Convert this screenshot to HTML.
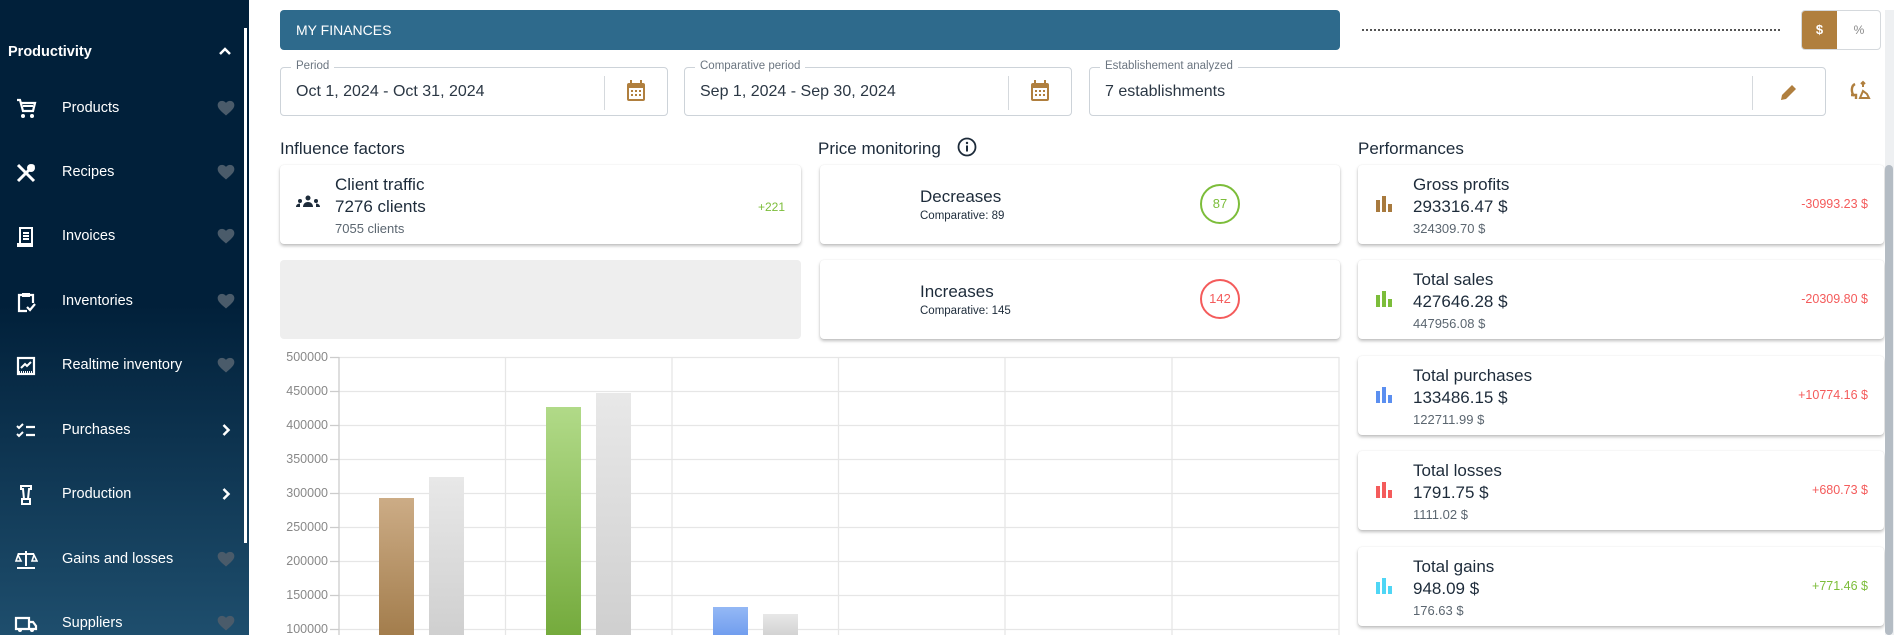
<!DOCTYPE html>
<html><head><meta charset="utf-8"><style>
*{box-sizing:border-box;margin:0;padding:0}
body{width:1898px;height:635px;overflow:hidden;background:#fff;font-family:"Liberation Sans",sans-serif;color:#1d2b3a;position:relative}
.a{position:absolute}
#sb{left:0;top:0;width:249px;height:635px;background:linear-gradient(180deg,#01203a 0%,#01203a 48%,#1e4e6d 100%)}
.it{position:absolute;left:0;width:249px;height:30px;color:#fff;font-size:14.5px}
.it .ic{position:absolute;left:14px;top:3px;width:24px;height:24px}
.it .lb{position:absolute;left:62px;top:6px}
.it .hr{position:absolute;left:216px;top:4px;width:20px;height:20px}
.fld{position:absolute;top:67px;height:49px;border:1px solid #cdd3d9;border-radius:4px}
.fld .lg{position:absolute;top:-8px;left:10px;background:#fff;padding:0 5px;font-size:11.5px;color:#6b7580}
.fld .v{position:absolute;left:15px;top:15px;font-size:16px;color:#2b3744}
.fld .sep{position:absolute;top:8px;width:1px;height:34px;background:#d5d9dd}
.card{position:absolute;background:#fff;border-radius:4px;box-shadow:0 2px 3px rgba(0,0,0,.25),0 0 1px rgba(0,0,0,.12)}
.st{position:absolute;top:139px;font-size:17px;color:#1d2b3a}
.pc .t{position:absolute;left:55px;top:10px;font-size:17px}
.pc .v{position:absolute;left:55px;top:32px;font-size:17px}
.pc .s{position:absolute;left:55px;top:56px;font-size:13px;color:#5b6670}
.pc .d{position:absolute;right:16px;top:32px;font-size:12.5px}
.pc svg{position:absolute;left:18px;top:31px}
.yl{position:absolute;left:282px;width:46px;text-align:right;font-size:12.5px;color:#888}
</style></head><body>
<div id="sb" class="a">
 <div class="a" style="left:244px;top:28px;width:3px;height:515px;background:#fff"></div>
 <div class="a" style="left:8px;top:44px;color:#fff;font-weight:bold;font-size:14.5px">Productivity</div>
 <svg class="a" style="left:218px;top:46px" width="14" height="10" viewBox="0 0 14 10"><path d="M2 8 L7 3 L12 8" stroke="#fff" stroke-width="2.5" fill="none"/></svg>

 <div class="it" style="top:94px"><svg class="ic" viewBox="0 0 24 24"><path d="M3 3h3l3 11h10l2-8H7" stroke="#fff" stroke-width="2.2" fill="none"/><path d="M9 9h10" stroke="#fff" stroke-width="2"/><circle cx="9" cy="19" r="2" fill="#fff"/><circle cx="18" cy="19" r="2" fill="#fff"/></svg><span class="lb">Products</span><svg class="hr" viewBox="0 0 24 24"><path d="M12 21l-1.5-1.3C5 15 2 12 2 8.5 2 5.5 4.4 3.5 7.2 3.5c1.7 0 3.5.8 4.8 2.3 1.3-1.5 3.1-2.3 4.8-2.3 2.8 0 5.2 2 5.2 5 0 3.5-3 6.5-8.5 11.2z" fill="#4a5b6a"/></svg></div>
 <div class="it" style="top:158px"><svg class="ic" viewBox="0 0 24 24"><path d="M4 4 L20 20 M20 4 L4 20" stroke="#fff" stroke-width="3"/><circle cx="17" cy="7" r="4" fill="#fff"/></svg><span class="lb">Recipes</span><svg class="hr" viewBox="0 0 24 24"><path d="M12 21l-1.5-1.3C5 15 2 12 2 8.5 2 5.5 4.4 3.5 7.2 3.5c1.7 0 3.5.8 4.8 2.3 1.3-1.5 3.1-2.3 4.8-2.3 2.8 0 5.2 2 5.2 5 0 3.5-3 6.5-8.5 11.2z" fill="#4a5b6a"/></svg></div>
 <div class="it" style="top:222px"><svg class="ic" viewBox="0 0 24 24"><path d="M6 3h12v16H6z M4 19h14v2H4z" stroke="#fff" stroke-width="2" fill="none"/><path d="M9 8h6M9 11h6M9 14h6" stroke="#fff" stroke-width="2"/></svg><span class="lb">Invoices</span><svg class="hr" viewBox="0 0 24 24"><path d="M12 21l-1.5-1.3C5 15 2 12 2 8.5 2 5.5 4.4 3.5 7.2 3.5c1.7 0 3.5.8 4.8 2.3 1.3-1.5 3.1-2.3 4.8-2.3 2.8 0 5.2 2 5.2 5 0 3.5-3 6.5-8.5 11.2z" fill="#4a5b6a"/></svg></div>
 <div class="it" style="top:287px"><svg class="ic" viewBox="0 0 24 24"><path d="M8 5H5v16h8 M16 5h3v8" stroke="#fff" stroke-width="2.2" fill="none"/><rect x="8" y="3" width="8" height="4" fill="#fff"/><path d="M13 17l3 3 5-6" stroke="#fff" stroke-width="2.2" fill="none"/></svg><span class="lb">Inventories</span><svg class="hr" viewBox="0 0 24 24"><path d="M12 21l-1.5-1.3C5 15 2 12 2 8.5 2 5.5 4.4 3.5 7.2 3.5c1.7 0 3.5.8 4.8 2.3 1.3-1.5 3.1-2.3 4.8-2.3 2.8 0 5.2 2 5.2 5 0 3.5-3 6.5-8.5 11.2z" fill="#4a5b6a"/></svg></div>
 <div class="it" style="top:351px"><svg class="ic" viewBox="0 0 24 24"><rect x="4" y="4" width="16" height="16" stroke="#fff" stroke-width="2.2" fill="none"/><path d="M7 14l4-4 2 2 4-4" stroke="#fff" stroke-width="2" fill="none"/><path d="M5 18h14" stroke="#fff" stroke-width="2" stroke-dasharray="1 1"/></svg><span class="lb">Realtime inventory</span><svg class="hr" viewBox="0 0 24 24"><path d="M12 21l-1.5-1.3C5 15 2 12 2 8.5 2 5.5 4.4 3.5 7.2 3.5c1.7 0 3.5.8 4.8 2.3 1.3-1.5 3.1-2.3 4.8-2.3 2.8 0 5.2 2 5.2 5 0 3.5-3 6.5-8.5 11.2z" fill="#4a5b6a"/></svg></div>
 <div class="it" style="top:416px"><svg class="ic" viewBox="0 0 24 24"><path d="M3 7l2 2 4-4 M3 15l2 2 4-4" stroke="#fff" stroke-width="2" fill="none"/><path d="M12 8h9M12 16h9" stroke="#fff" stroke-width="2.2"/></svg><span class="lb">Purchases</span><svg class="hr" viewBox="0 0 24 24"><path d="M9 6l6 6-6 6" stroke="#fff" stroke-width="3" fill="none"/></svg></div>
 <div class="it" style="top:480px"><svg class="ic" viewBox="0 0 24 24"><path d="M7 3h10v3h-2l-1 10h-4L9 6H7z M8 16h8v5H8z" stroke="#fff" stroke-width="2" fill="none"/></svg><span class="lb">Production</span><svg class="hr" viewBox="0 0 24 24"><path d="M9 6l6 6-6 6" stroke="#fff" stroke-width="3" fill="none"/></svg></div>
 <div class="it" style="top:545px"><svg class="ic" viewBox="0 0 24 24"><path d="M12 3v15M4 6h16M3 20h18" stroke="#fff" stroke-width="2"/><path d="M4 7l-2 6h5z M20 7l-2 6h5z" stroke="#fff" stroke-width="1.6" fill="none"/></svg><span class="lb">Gains and losses</span><svg class="hr" viewBox="0 0 24 24"><path d="M12 21l-1.5-1.3C5 15 2 12 2 8.5 2 5.5 4.4 3.5 7.2 3.5c1.7 0 3.5.8 4.8 2.3 1.3-1.5 3.1-2.3 4.8-2.3 2.8 0 5.2 2 5.2 5 0 3.5-3 6.5-8.5 11.2z" fill="#4a5b6a"/></svg></div>
 <div class="it" style="top:609px"><svg class="ic" viewBox="0 0 24 24"><path d="M2 6h13v11H2z M15 10h4l3 4v3h-7" stroke="#fff" stroke-width="2.2" fill="none"/><circle cx="6" cy="18" r="2" fill="#fff"/><circle cx="18" cy="18" r="2" fill="#fff"/></svg><span class="lb">Suppliers</span><svg class="hr" viewBox="0 0 24 24"><path d="M12 21l-1.5-1.3C5 15 2 12 2 8.5 2 5.5 4.4 3.5 7.2 3.5c1.7 0 3.5.8 4.8 2.3 1.3-1.5 3.1-2.3 4.8-2.3 2.8 0 5.2 2 5.2 5 0 3.5-3 6.5-8.5 11.2z" fill="#4a5b6a"/></svg></div>
</div>

<div class="a" style="left:280px;top:10px;width:1060px;height:40px;background:#2e6a8c;border-radius:4px;color:#fff;font-size:14px;padding:12px 16px">MY FINANCES</div>
<div class="a" style="left:1362px;top:29px;width:418px;border-top:2px dotted #555"></div>
<div class="a" style="left:1801px;top:10px;width:80px;height:40px;border:1px solid #d5d9dd;border-radius:4px;overflow:hidden">
 <div class="a" style="left:0;top:0;width:35px;height:40px;background:#b07f3e;color:#fff;font-size:13px;font-weight:bold;text-align:center;line-height:38px">$</div>
 <div class="a" style="left:35px;top:0;width:44px;height:40px;color:#888;font-size:12px;text-align:center;line-height:38px">%</div>
</div>

<div class="fld" style="left:280px;width:388px"><span class="lg">Period</span><span class="v">Oct 1, 2024 - Oct 31, 2024</span><div class="sep" style="left:323px"></div>
<svg class="a" style="left:345px;top:12px" width="20" height="22" viewBox="0 0 20 22"><rect x="1" y="3" width="18" height="18" rx="2" fill="#b07f3e"/><rect x="3" y="8" width="14" height="11" fill="#fff"/><rect x="4" y="0" width="2" height="5" fill="#b07f3e"/><rect x="14" y="0" width="2" height="5" fill="#b07f3e"/><g fill="#b07f3e"><rect x="5" y="10" width="2" height="2"/><rect x="9" y="10" width="2" height="2"/><rect x="13" y="10" width="2" height="2"/><rect x="5" y="14" width="2" height="2"/><rect x="9" y="14" width="2" height="2"/><rect x="13" y="14" width="2" height="2"/></g></svg></div>
<div class="fld" style="left:684px;width:388px"><span class="lg">Comparative period</span><span class="v">Sep 1, 2024 - Sep 30, 2024</span><div class="sep" style="left:323px"></div>
<svg class="a" style="left:345px;top:12px" width="20" height="22" viewBox="0 0 20 22"><rect x="1" y="3" width="18" height="18" rx="2" fill="#b07f3e"/><rect x="3" y="8" width="14" height="11" fill="#fff"/><rect x="4" y="0" width="2" height="5" fill="#b07f3e"/><rect x="14" y="0" width="2" height="5" fill="#b07f3e"/><g fill="#b07f3e"><rect x="5" y="10" width="2" height="2"/><rect x="9" y="10" width="2" height="2"/><rect x="13" y="10" width="2" height="2"/><rect x="5" y="14" width="2" height="2"/><rect x="9" y="14" width="2" height="2"/><rect x="13" y="14" width="2" height="2"/></g></svg></div>
<div class="fld" style="left:1089px;width:737px"><span class="lg">Establishement analyzed</span><span class="v">7 establishments</span><div class="sep" style="left:662px"></div>
<svg class="a" style="left:689px;top:14px" width="20" height="20" viewBox="0 0 20 20"><path d="M2 18l1-5L13 3l4 4L7 17z" fill="#b07f3e"/></svg></div>
<svg class="a" style="left:1849px;top:80px" width="22" height="22" viewBox="0 0 22 22"><path d="M6 4C2 6 2 12 5 16 M2 15h5v4" stroke="#b07f3e" stroke-width="2.4" fill="none"/><path d="M14 2v5 M12 4l2-2 2 2" stroke="#b07f3e" stroke-width="2" fill="none"/><path d="M11 18l3-7 4 3 2 4z" stroke="#b07f3e" stroke-width="2" fill="none"/></svg>

<div class="st" style="left:280px">Influence factors</div>
<div class="st" style="left:818px">Price monitoring</div>
<svg class="a" style="left:957px;top:137px" width="20" height="20" viewBox="0 0 20 20"><circle cx="10" cy="10" r="8.5" stroke="#1d2b3a" stroke-width="1.8" fill="none"/><rect x="9" y="8.5" width="2" height="6" fill="#1d2b3a"/><circle cx="10" cy="6" r="1.2" fill="#1d2b3a"/></svg>
<div class="st" style="left:1358px">Performances</div>

<div class="card pc" style="left:280px;top:165px;width:521px;height:79px">
 <svg style="left:16px;top:30px" width="24" height="14" viewBox="0 0 24 14"><circle cx="12" cy="3" r="2.5" fill="#1d2b3a"/><path d="M7 12c0-3 2-5 5-5s5 2 5 5z" fill="#1d2b3a"/><circle cx="4" cy="6" r="2" fill="#1d2b3a"/><circle cx="20" cy="6" r="2" fill="#1d2b3a"/><path d="M0 12c0-2 1.5-3.5 4-3.5v3.5z M24 12c0-2-1.5-3.5-4-3.5v3.5z" fill="#1d2b3a"/></svg>
 <div class="t">Client traffic</div><div class="v">7276 clients</div><div class="s">7055 clients</div><div class="d" style="color:#7cbd3a;top:35px;font-size:12px">+221</div>
</div>
<div class="a" style="left:280px;top:260px;width:521px;height:79px;background:#eee;border-radius:4px"></div>

<div class="card" style="left:820px;top:165px;width:520px;height:79px">
 <div class="a" style="left:100px;top:22px;font-size:17px">Decreases</div>
 <div class="a" style="left:100px;top:45px;font-size:11.5px">Comparative: 89</div>
 <div class="a" style="left:380px;top:19px;width:40px;height:40px;border:2.5px solid #7cbd3a;border-radius:50%;text-align:center;line-height:35px;color:#7cbd3a;font-size:13px">87</div>
</div>
<div class="card" style="left:820px;top:260px;width:520px;height:79px">
 <div class="a" style="left:100px;top:22px;font-size:17px">Increases</div>
 <div class="a" style="left:100px;top:45px;font-size:11.5px">Comparative: 145</div>
 <div class="a" style="left:380px;top:19px;width:40px;height:40px;border:2.5px solid #f45b5b;border-radius:50%;text-align:center;line-height:35px;color:#f45b5b;font-size:13px">142</div>
</div>

<!-- chart -->
<svg class="a" style="left:0;top:0" width="1360" height="635">
 <g stroke="#e6e6e6" stroke-width="1.3">
  <line x1="339" x2="1339" y1="357.5" y2="357.5"/><line x1="339" x2="1339" y1="391.5" y2="391.5"/><line x1="339" x2="1339" y1="425.5" y2="425.5"/><line x1="339" x2="1339" y1="459.5" y2="459.5"/><line x1="339" x2="1339" y1="493.5" y2="493.5"/><line x1="339" x2="1339" y1="527.5" y2="527.5"/><line x1="339" x2="1339" y1="561.5" y2="561.5"/><line x1="339" x2="1339" y1="595.5" y2="595.5"/><line x1="339" x2="1339" y1="629.5" y2="629.5"/>
  <line x1="505.5" x2="505.5" y1="357" y2="635"/><line x1="672" x2="672" y1="357" y2="635"/><line x1="838.5" x2="838.5" y1="357" y2="635"/><line x1="1005" x2="1005" y1="357" y2="635"/><line x1="1172" x2="1172" y1="357" y2="635"/><line x1="1339" x2="1339" y1="357" y2="635"/>
 </g>
 <g stroke="#ccc" stroke-width="1.3"><line x1="339" x2="339" y1="357" y2="635"/>
 <line x1="330" x2="339" y1="357.5" y2="357.5"/><line x1="330" x2="339" y1="391.5" y2="391.5"/><line x1="330" x2="339" y1="425.5" y2="425.5"/><line x1="330" x2="339" y1="459.5" y2="459.5"/><line x1="330" x2="339" y1="493.5" y2="493.5"/><line x1="330" x2="339" y1="527.5" y2="527.5"/><line x1="330" x2="339" y1="561.5" y2="561.5"/><line x1="330" x2="339" y1="595.5" y2="595.5"/><line x1="330" x2="339" y1="629.5" y2="629.5"/></g>
 <defs>
  <linearGradient id="gb" x1="0" y1="0" x2="0" y2="1"><stop offset="0" stop-color="#ccac86"/><stop offset="1" stop-color="#a27c4b"/></linearGradient>
  <linearGradient id="gg" x1="0" y1="0" x2="0" y2="1"><stop offset="0" stop-color="#b1da88"/><stop offset="1" stop-color="#74aa3c"/></linearGradient>
  <linearGradient id="gr" x1="0" y1="0" x2="0" y2="1"><stop offset="0" stop-color="#e8e8e8"/><stop offset="1" stop-color="#cfcfcf"/></linearGradient>
  <linearGradient id="gl" x1="0" y1="0" x2="0" y2="1"><stop offset="0" stop-color="#94b8f5"/><stop offset="1" stop-color="#6f9cee"/></linearGradient>
 </defs>
 <rect x="379" y="498" width="35" height="140" fill="url(#gb)"/>
 <rect x="429" y="477" width="35" height="160" fill="url(#gr)"/>
 <rect x="546" y="407" width="35" height="230" fill="url(#gg)"/>
 <rect x="596" y="393" width="35" height="245" fill="url(#gr)"/>
 <rect x="713" y="607" width="35" height="30" fill="url(#gl)"/>
 <rect x="763" y="614" width="35" height="25" fill="url(#gr)"/>
</svg>
<div class="yl" style="top:350px">500000</div><div class="yl" style="top:384px">450000</div><div class="yl" style="top:418px">400000</div><div class="yl" style="top:452px">350000</div><div class="yl" style="top:486px">300000</div><div class="yl" style="top:520px">250000</div><div class="yl" style="top:554px">200000</div><div class="yl" style="top:588px">150000</div><div class="yl" style="top:622px">100000</div>

<!-- performances -->
<div class="card pc" style="left:1358px;top:165px;width:526px;height:79px"><svg width="16" height="16" viewBox="0 0 16 16"><rect x="0" y="4" width="4" height="12" fill="#a87a3e"/><rect x="6" y="0" width="4" height="16" fill="#a87a3e"/><rect x="12" y="8" width="4" height="8" fill="#a87a3e"/></svg><div class="t">Gross profits</div><div class="v">293316.47 $</div><div class="s">324309.70 $</div><div class="d" style="color:#f45b5b">-30993.23 $</div></div>
<div class="card pc" style="left:1358px;top:260px;width:526px;height:79px"><svg width="16" height="16" viewBox="0 0 16 16"><rect x="0" y="4" width="4" height="12" fill="#7cbd3a"/><rect x="6" y="0" width="4" height="16" fill="#7cbd3a"/><rect x="12" y="8" width="4" height="8" fill="#7cbd3a"/></svg><div class="t">Total sales</div><div class="v">427646.28 $</div><div class="s">447956.08 $</div><div class="d" style="color:#f45b5b">-20309.80 $</div></div>
<div class="card pc" style="left:1358px;top:356px;width:526px;height:79px"><svg width="16" height="16" viewBox="0 0 16 16"><rect x="0" y="4" width="4" height="12" fill="#5b8ff0"/><rect x="6" y="0" width="4" height="16" fill="#5b8ff0"/><rect x="12" y="8" width="4" height="8" fill="#5b8ff0"/></svg><div class="t">Total purchases</div><div class="v">133486.15 $</div><div class="s">122711.99 $</div><div class="d" style="color:#f45b5b">+10774.16 $</div></div>
<div class="card pc" style="left:1358px;top:451px;width:526px;height:79px"><svg width="16" height="16" viewBox="0 0 16 16"><rect x="0" y="4" width="4" height="12" fill="#f45b5b"/><rect x="6" y="0" width="4" height="16" fill="#f45b5b"/><rect x="12" y="8" width="4" height="8" fill="#f45b5b"/></svg><div class="t">Total losses</div><div class="v">1791.75 $</div><div class="s">1111.02 $</div><div class="d" style="color:#f45b5b">+680.73 $</div></div>
<div class="card pc" style="left:1358px;top:547px;width:526px;height:79px"><svg width="16" height="16" viewBox="0 0 16 16"><rect x="0" y="4" width="4" height="12" fill="#4fd6f5"/><rect x="6" y="0" width="4" height="16" fill="#4fd6f5"/><rect x="12" y="8" width="4" height="8" fill="#4fd6f5"/></svg><div class="t">Total gains</div><div class="v">948.09 $</div><div class="s">176.63 $</div><div class="d" style="color:#7cbd3a">+771.46 $</div></div>

<div class="a" style="left:1885px;top:10px;width:9px;height:625px;background:#eef0f2"></div>
<div class="a" style="left:1885px;top:165px;width:8px;height:470px;background:#b4bcc4;border-radius:4px"></div>
</body></html>
